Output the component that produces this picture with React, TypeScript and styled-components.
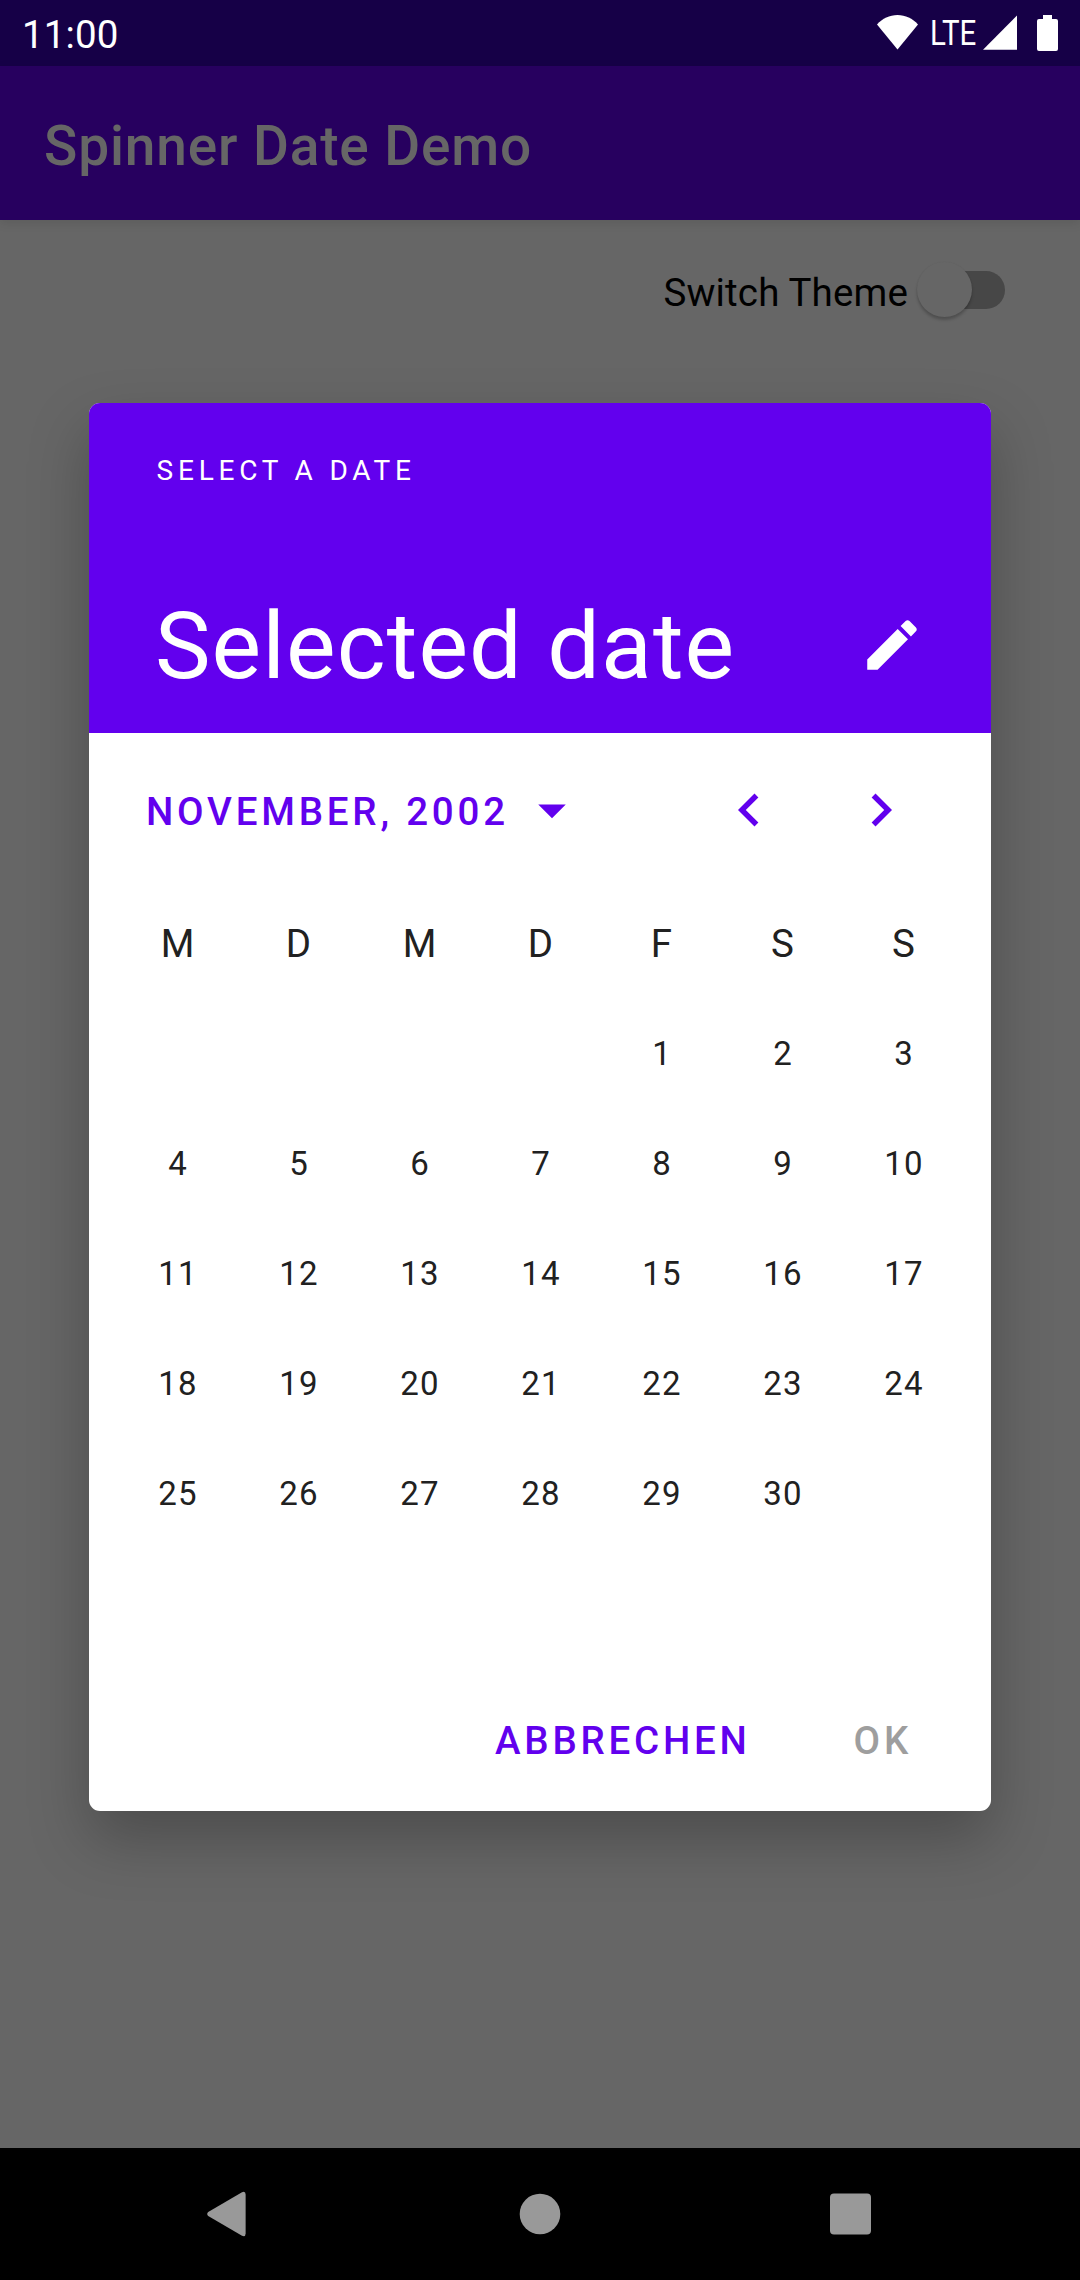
import React from "react";
import styled, { createGlobalStyle } from "styled-components";

const GlobalStyle = createGlobalStyle`
  *, *::before, *::after { box-sizing: border-box; }
  body {
    margin: 0;
    font-family: Roboto, "Noto Sans", sans-serif;
    background: #666666;
  }
  button {
    font: inherit;
    border: 0;
    padding: 0;
    background: none;
    color: inherit;
  }
  svg { display: block; }
`;

const Screen = styled.div`
  position: relative;
  width: 1080px;
  height: 2280px;
  display: flex;
  flex-direction: column;
  overflow: hidden;
  background: #666666;
`;

const StatusBar = styled.header`
  height: 66px;
  flex: none;
  display: flex;
  align-items: center;
  justify-content: space-between;
  padding: 0 22px;
  background: #160047;
  color: #ffffff;
`;

const Clock = styled.span`
  padding-top: 3px;
  font-size: 38.5px;
  line-height: 46px;
  letter-spacing: 0.15px;
`;

const StatusIcons = styled.div`
  display: flex;
  align-items: center;
`;

const Network = styled.span`
  width: 46px;
  margin: 0 7px 0 12px;
  font-size: 34.3px;
  line-height: 40px;
  white-space: nowrap;
  transform: scaleX(0.86);
  transform-origin: 0 50%;
`;

const AppBar = styled.div`
  height: 154px;
  flex: none;
  display: flex;
  align-items: center;
  padding: 6px 44px 0;
  background: #27005f;
  box-shadow: 0 3px 10px rgba(0, 0, 0, 0.1);
  z-index: 1;
`;

const AppTitle = styled.h1`
  margin: 0;
  font-size: 55px;
  line-height: 64px;
  font-weight: 500;
  letter-spacing: 0.86px;
  color: #666666;
`;

const Content = styled.main`
  flex: 1;
  padding: 42px 75px 0 0;
`;

const SwitchRow = styled.label`
  display: flex;
  justify-content: flex-end;
  align-items: center;
  height: 55px;
  color: #000000;
  font-size: 38.5px;
`;

const SwitchLabel = styled.span`
  line-height: 46px;
  padding-top: 6px;
  letter-spacing: 0.15px;
`;

const Track = styled.span`
  display: flex;
  align-items: center;
  width: 75px;
  height: 38px;
  margin-left: 22px;
  border-radius: 19px;
  background: #474747;
`;

const Thumb = styled.span`
  flex: none;
  width: 55px;
  height: 55px;
  margin-left: -13px;
  border-radius: 50%;
  background: #666666;
  box-shadow: 0 3px 3px rgba(0, 0, 0, 0.22), 0 0 2px rgba(0, 0, 0, 0.05);
`;

const NavBar = styled.nav`
  height: 132px;
  flex: none;
  display: flex;
  justify-content: center;
  background: #000000;
`;

const NavButton = styled.button`
  width: 310px;
  display: flex;
  align-items: center;
  justify-content: center;
`;

const DialogLayer = styled.div`
  position: absolute;
  inset: 0;
  z-index: 2;
  display: flex;
  justify-content: center;
  align-items: flex-start;
  padding-top: 403px;
  pointer-events: none;
`;

const Dialog = styled.section`
  width: 902px;
  height: 1408px;
  display: flex;
  flex-direction: column;
  overflow: hidden;
  border-radius: 11px;
  background: #ffffff;
  box-shadow: 0 28px 60px rgba(0, 0, 0, 0.25);
  pointer-events: auto;
`;

const DialogHeader = styled.div`
  height: 330px;
  flex: none;
  display: flex;
  flex-direction: column;
  justify-content: space-between;
  padding: 52px 66px 32px;
  background: #6200ee;
  color: #ffffff;
`;

const Overline = styled.div`
  padding-left: 1.5px;
  font-size: 28px;
  line-height: 32px;
  letter-spacing: 4.8px;
`;

const Headline = styled.div`
  display: flex;
  align-items: center;
  justify-content: space-between;
`;

const SelectedDate = styled.h2`
  margin: 0;
  font-size: 93.5px;
  line-height: 110px;
  font-weight: 400;
  letter-spacing: 1.08px;
`;

const EditButton = styled.button`
  width: 66px;
  height: 66px;
  margin-bottom: 2px;
`;

const MonthBar = styled.div`
  height: 132px;
  flex: none;
  margin-top: 11px;
  padding: 0 44px 0 57px;
  display: flex;
  align-items: center;
  color: #6200ee;
`;

const MonthButton = styled.button`
  display: flex;
  align-items: center;
  gap: 10px;
`;

const MonthLabel = styled.span`
  padding-top: 3px;
  font-size: 38.5px;
  line-height: 46px;
  font-weight: 500;
  letter-spacing: 3.8px;
`;

const Pager = styled.div`
  margin-left: auto;
  display: flex;
`;

const PageButton = styled.button`
  width: 132px;
  height: 132px;
  display: flex;
  align-items: center;
  justify-content: center;
`;

const MonthGrid = styled.div`
  display: grid;
  grid-template-columns: repeat(7, 121px);
  justify-content: center;
  color: #212121;
`;

const Weekday = styled.div`
  height: 121px;
  padding: 45px 0 0 1px;
  text-align: center;
  font-size: 38.5px;
  line-height: 46px;
`;

const Day = styled.div`
  height: 110px;
  display: flex;
  align-items: center;
  justify-content: center;
  padding: 4px 0 0 2px;
  font-size: 33px;
  line-height: 40px;
  letter-spacing: 0.0333em;
`;

const Actions = styled.div`
  margin-top: auto;
  height: 141px;
  flex: none;
  display: flex;
  justify-content: flex-end;
  align-items: center;
  gap: 37px;
  padding-right: 57px;
`;

const ActionButton = styled.button<{ $disabled?: boolean }>`
  padding: 0 22px 0 44px;
  font-size: 38.5px;
  line-height: 46px;
  font-weight: 500;
  letter-spacing: 3.77px;
  color: ${(p) => (p.$disabled ? "#9e9e9e" : "#6200ee")};
`;

const WEEKDAYS = ["M", "D", "M", "D", "F", "S", "S"];
const LEADING_BLANKS = 4;
const DAYS_IN_MONTH = 30;

const cells: (number | null)[] = [
  ...Array.from({ length: LEADING_BLANKS }, () => null),
  ...Array.from({ length: DAYS_IN_MONTH }, (_, i) => i + 1),
];

function Icon({ path }: { path: string }) {
  return (
    <svg width="66" height="66" viewBox="0 0 24 24" fill="currentColor">
      <path d={path} />
    </svg>
  );
}

export default function App() {
  return (
    <>
      <GlobalStyle />
      <Screen>
        <StatusBar>
          <Clock>11:00</Clock>
          <StatusIcons>
            <svg width="41" height="36" viewBox="0 0 41 36" fill="#fff">
              <path d="M0 9.500C5.500 3.500 12.500 0 20.500 0S35.500 3.500 41 9.500L20.500 34.500Z" />
            </svg>
            <Network>LTE</Network>
            <svg width="34" height="36" viewBox="0 0 34 36" fill="#fff">
              <path d="M34 0.500V34.700H0Z" />
            </svg>
            <svg width="41" height="36" viewBox="0 0 41 36" fill="#fff">
              <path d="M26 0H35V4H39Q41 4 41 6V34Q41 36 39 36H22Q20 36 20 34V6Q20 4 22 4H26Z" />
            </svg>
          </StatusIcons>
        </StatusBar>
        <AppBar>
          <AppTitle>Spinner Date Demo</AppTitle>
        </AppBar>
        <Content>
          <SwitchRow>
            <SwitchLabel>Switch Theme</SwitchLabel>
            <Track>
              <Thumb />
            </Track>
          </SwitchRow>
        </Content>
        <NavBar>
          <NavButton aria-label="Back">
            <svg width="47" height="46" viewBox="0 0 47 46" fill="#999">
              <path d="M1.200 21L35 1.200Q38.600 -0.300 38.600 3.500V42.500Q38.600 46.300 35 44.800L1.200 25Q-0.800 23 1.200 21Z" />
            </svg>
          </NavButton>
          <NavButton aria-label="Home">
            <svg width="42" height="42" viewBox="0 0 42 42" fill="#999">
              <circle cx="21" cy="21" r="20.300" />
            </svg>
          </NavButton>
          <NavButton aria-label="Recent apps">
            <svg width="42" height="42" viewBox="0 0 42 42" fill="#999">
              <rect x="1" y="0.500" width="41" height="41" rx="4" />
            </svg>
          </NavButton>
        </NavBar>
        <DialogLayer>
          <Dialog role="dialog">
            <DialogHeader>
              <Overline>SELECT A DATE</Overline>
              <Headline>
                <SelectedDate>Selected date</SelectedDate>
                <EditButton aria-label="Edit">
                  <Icon path="M3 17.250V21h3.750L17.810 9.940l-3.750-3.750L3 17.250zM20.710 7.040c.39-.39.39-1.020 0-1.410l-2.340-2.340c-.39-.39-1.020-.39-1.410 0l-1.830 1.830 3.750 3.750 1.830-1.830z" />
                </EditButton>
              </Headline>
            </DialogHeader>
            <MonthBar>
              <MonthButton>
                <MonthLabel>NOVEMBER, 2002</MonthLabel>
                <Icon path="M7 10l5 5 5-5z" />
              </MonthButton>
              <Pager>
                <PageButton aria-label="Previous month">
                  <Icon path="M15.410 7.410L14 6l-6 6 6 6 1.410-1.410L10.830 12z" />
                </PageButton>
                <PageButton aria-label="Next month">
                  <Icon path="M10 6L8.590 7.410 13.170 12l-4.580 4.590L10 18l6-6z" />
                </PageButton>
              </Pager>
            </MonthBar>
            <MonthGrid>
              {WEEKDAYS.map((name, i) => (
                <Weekday key={i}>{name}</Weekday>
              ))}
              {cells.map((day, i) => (
                <Day key={i}>{day}</Day>
              ))}
            </MonthGrid>
            <Actions>
              <ActionButton>ABBRECHEN</ActionButton>
              <ActionButton $disabled>OK</ActionButton>
            </Actions>
          </Dialog>
        </DialogLayer>
      </Screen>
    </>
  );
}
